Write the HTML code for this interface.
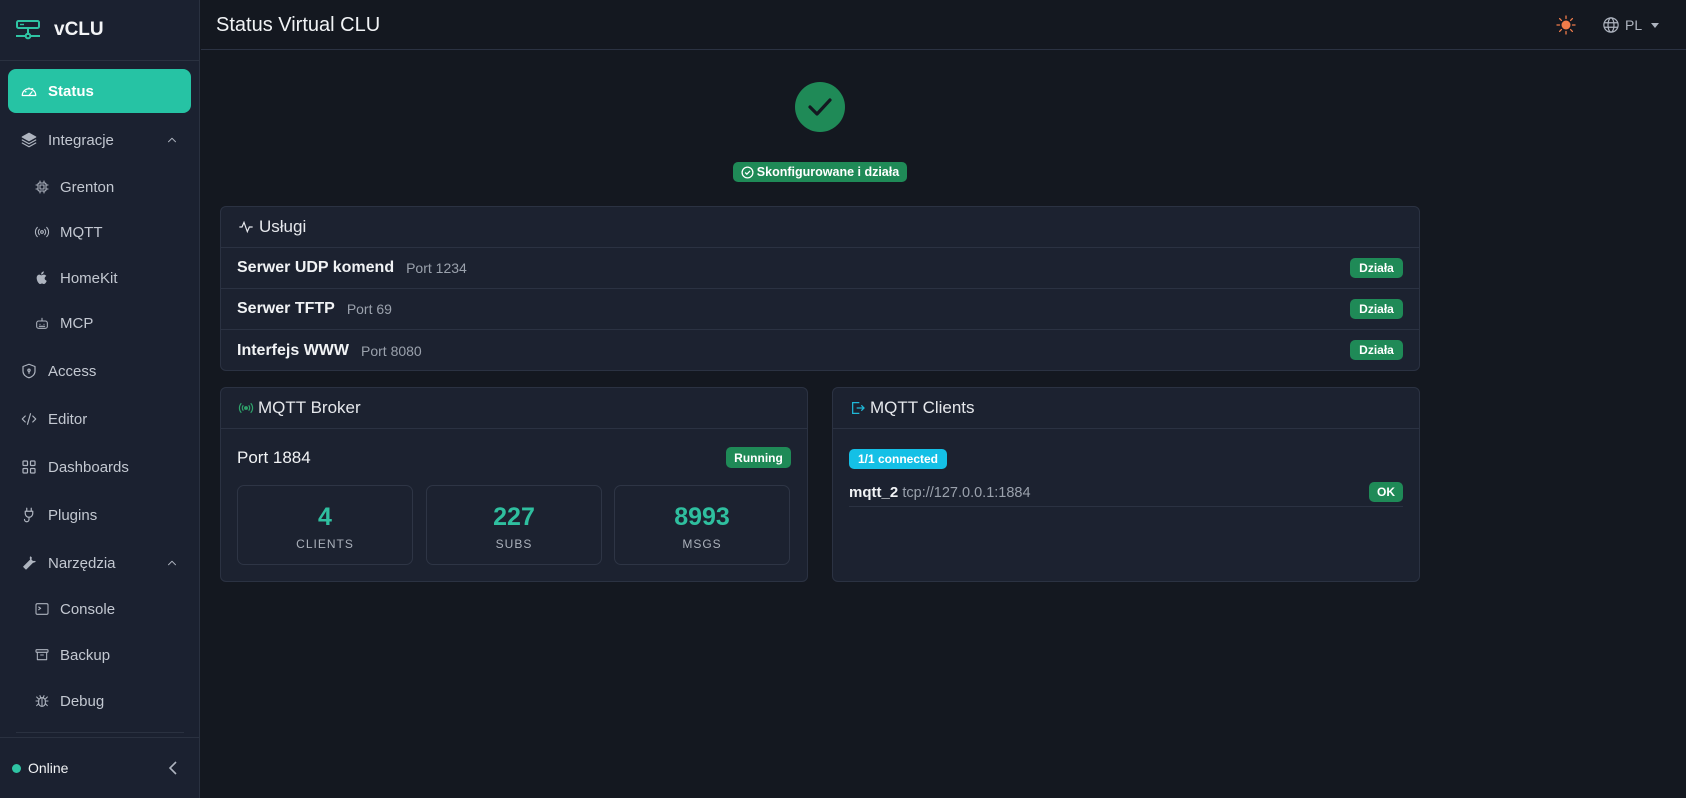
<!DOCTYPE html>
<html><head><meta charset="utf-8">
<style>
*{box-sizing:border-box;margin:0;padding:0}
body{width:1686px;height:798px;overflow:hidden;background:#141820;font-family:"Liberation Sans",sans-serif;color:#e6e8ec;position:relative}
.sb{position:absolute;left:0;top:0;width:200px;height:798px;background:#1b2130;border-right:1px solid #2a3140}
.abs{position:absolute}
.nav{position:absolute;left:0;width:200px;height:40px;display:flex;align-items:center;font-size:15px;color:#c3c8d1}
.nav svg{width:18px;height:18px;fill:none;stroke:#aeb4bf;stroke-width:1.6;stroke-linecap:round;stroke-linejoin:round}
.top{padding-left:20px}.top span{margin-left:10px}
.sub{padding-left:34px}.sub span{margin-left:10px}
.card{position:absolute;background:#1c2230;border:1px solid #2b3242;border-radius:6px}
.hd{height:41px;border-bottom:1px solid #2b3242;display:flex;align-items:center;padding-left:16px;font-size:17px;color:#e6e8ec}
.row{height:41px;border-bottom:1px solid #2b3242;display:flex;align-items:center;padding:0 16px;position:relative}
.row b{font-size:16px;color:#f1f3f5}.row i{font-style:normal;font-size:14px;color:#9aa1ac;margin-left:12px}
.bdg{position:absolute;background:#1f8a57;color:#fff;font-weight:bold;font-size:12px;border-radius:5px;display:flex;align-items:center;justify-content:center}
.stat{position:absolute;top:485px;width:176px;height:80px;border:1px solid #2e3545;border-radius:7px;text-align:center}
.stat .n{font-size:25px;font-weight:bold;color:#2fbf9f;margin-top:17px;line-height:28px}
.stat .l{font-size:12px;color:#aab0ba;letter-spacing:1px;margin-top:6px}
</style></head><body>
<div class="sb">
 <svg class="abs" style="left:15px;top:20px" width="26" height="20" viewBox="0 0 26 20" fill="none" stroke="#2fc4a4" stroke-width="2"><rect x="2" y="1" width="22" height="7" rx="1.5"/><path d="M13 8v7M1 16h9M16 16h9"/><circle cx="13" cy="16" r="2.3"/><path d="M5 4.5h4" stroke-width="1.4"/></svg>
 <div class="abs" style="left:54px;top:19px;font-size:19px;font-weight:bold;color:#f3f4f6">vCLU</div>
 <div class="abs" style="left:0;top:60px;width:200px;border-top:1px solid #2a3140"></div>
 <div class="abs" style="left:8px;top:69px;width:183px;height:44px;background:#26c3a4;border-radius:8px"></div>
 <div class="nav top" style="top:71px;color:#fff"><svg viewBox="0 0 24 24" style="stroke:#fff"><path d="M3 18a9 9 0 1 1 18 0z"/><path d="M12 18l4-5M7 13h1M16 9h1M12 8v1"/></svg><span style="font-weight:bold;color:#fff">Status</span></div>
 <div class="nav top" style="top:120px"><svg viewBox="0 0 24 24" style="fill:#aeb4bf"><path d="M12 3l9 5-9 5-9-5z"/><path d="M3 12l9 5 9-5M3 16l9 5 9-5" fill="none"/></svg><span>Integracje</span><svg viewBox="0 0 24 24" style="position:absolute;left:165px;width:14px"><path d="M6 15l6-6 6 6"/></svg></div>
 <div class="nav sub" style="top:167px"><svg viewBox="0 0 24 24" style="width:16px"><rect x="6" y="6" width="12" height="12" rx="2"/><rect x="9" y="9" width="6" height="6"/><path d="M9 3v3M15 3v3M9 18v3M15 18v3M3 9h3M3 15h3M18 9h3M18 15h3"/></svg><span>Grenton</span></div>
 <div class="nav sub" style="top:212px"><svg viewBox="0 0 24 24" style="width:16px"><circle cx="12" cy="12" r="2"/><path d="M8 8a6 6 0 0 0 0 8M16 8a6 6 0 0 1 0 8M5 5a10 10 0 0 0 0 14M19 5a10 10 0 0 1 0 14"/></svg><span>MQTT</span></div>
 <div class="nav sub" style="top:258px"><svg viewBox="0 0 24 24" style="width:16px;fill:#aeb4bf;stroke:none"><path d="M16 13c0-3 2.5-4 2.5-4-1.5-2-3.5-2-4-2-1.7 0-2.3 1-3.5 1S9.5 7 8 7c-2 0-4 1.7-4 5 0 4 3 9 5 9 1.2 0 1.7-.8 3-.8s1.8.8 3 .8c2 0 3.6-3.5 4-4.5C19 16 16 15 16 13zM13.5 5.5c1-1 1.3-2.300 1.2-3.500-1 .1-2.300.7-3 1.600-.7.800-1.200 2-1 3.200 1.100.1 2.200-.5 2.800-1.300z"/></svg><span>HomeKit</span></div>
 <div class="nav sub" style="top:303px"><svg viewBox="0 0 24 24" style="width:16px"><rect x="4" y="9" width="16" height="11" rx="3"/><path d="M12 5v4M9 14h.01M15 14h.01M8 17h8"/></svg><span>MCP</span></div>
 <div class="nav top" style="top:351px"><svg viewBox="0 0 24 24"><path d="M12 3l8 3v6c0 5-4 8-8 9-4-1-8-4-8-9V6z"/><circle cx="12" cy="11" r="1.5"/><path d="M12 12.5V15"/></svg><span>Access</span></div>
 <div class="nav top" style="top:399px"><svg viewBox="0 0 24 24"><path d="M7 8l-4 4 4 4M17 8l4 4-4 4M14 5l-4 14"/></svg><span>Editor</span></div>
 <div class="nav top" style="top:447px"><svg viewBox="0 0 24 24"><rect x="4" y="4" width="6" height="6" rx="1"/><rect x="14" y="4" width="6" height="6" rx="1"/><rect x="4" y="14" width="6" height="6" rx="1"/><rect x="14" y="14" width="6" height="6" rx="1"/></svg><span>Dashboards</span></div>
 <div class="nav top" style="top:495px"><svg viewBox="0 0 24 24"><path d="M9 3v4M15 3v4M7 7h10v3a5 5 0 0 1-10 0zM12 15v3a3 3 0 0 1-6 0"/></svg><span>Plugins</span></div>
 <div class="nav top" style="top:543px"><svg viewBox="0 0 24 24" style="fill:#aeb4bf"><path d="M14 4a5 5 0 0 0 6 6l-3 1-9 9-3-3 9-9 1-3z"/></svg><span>Narzędzia</span><svg viewBox="0 0 24 24" style="position:absolute;left:165px;width:14px"><path d="M6 15l6-6 6 6"/></svg></div>
 <div class="nav sub" style="top:589px"><svg viewBox="0 0 24 24" style="width:16px"><rect x="3" y="4" width="18" height="16" rx="2"/><path d="M7 9l3 2-3 2"/></svg><span>Console</span></div>
 <div class="nav sub" style="top:635px"><svg viewBox="0 0 24 24" style="width:16px"><rect x="3" y="4" width="18" height="4" rx="1"/><path d="M5 8v11h14V8M10 12h4"/></svg><span>Backup</span></div>
 <div class="nav sub" style="top:681px"><svg viewBox="0 0 24 24" style="width:16px"><rect x="7" y="7" width="10" height="13" rx="5"/><path d="M12 7v13M3 12h4M17 12h4M4 6l3 3M20 6l-3 3M4 19l3-3M20 19l-3-3M9 4l1 3M15 4l-1 3"/></svg><span>Debug</span></div>
 <div class="abs" style="left:16px;top:732px;width:168px;border-top:1px solid #2a3140"></div>
 <div class="abs" style="left:0;top:737px;width:200px;border-top:1px solid #2a3140"></div>
 <div class="abs" style="left:12px;top:764px;width:9px;height:9px;border-radius:50%;background:#2fc4a4"></div>
 <div class="abs" style="left:28px;top:760px;font-size:14px;color:#f1f3f5">Online</div>
 <svg class="abs" style="left:166px;top:760px" width="14" height="16" viewBox="0 0 14 16" fill="none" stroke="#aeb4bf" stroke-width="1.6"><path d="M10 2L4 8l6 6"/></svg>
</div>
<div class="abs" style="left:201px;top:49px;width:1485px;border-top:1px solid #2b3242"></div>
<div class="abs" style="left:216px;top:14px;font-size:20px;color:#f1f3f5">Status Virtual CLU</div>
<svg class="abs" style="left:1556px;top:15px" width="20" height="20" viewBox="0 0 20 20"><circle cx="10" cy="10" r="4.5" fill="#f07c4a"/><g stroke="#f07c4a" stroke-width="1.3" stroke-linecap="round"><path d="M10 1v2.5M10 16.5V19M1 10h2.5M16.5 10H19M3.6 3.6l1.8 1.8M14.6 14.6l1.8 1.8M3.6 16.4l1.8-1.8M14.6 5.4l1.8-1.8"/></g></svg>
<svg class="abs" style="left:1602px;top:16px" width="18" height="18" viewBox="0 0 24 24" fill="none" stroke="#aeb4bf" stroke-width="1.6"><circle cx="12" cy="12" r="9.5"/><ellipse cx="12" cy="12" rx="4" ry="9.5"/><path d="M3 9h18M3 15h18"/></svg>
<div class="abs" style="left:1625px;top:17px;font-size:14px;color:#aeb4bf">PL</div>
<div class="abs" style="left:1651px;top:23px;border:4px solid transparent;border-top:5px solid #aeb4bf"></div>

<div class="abs" style="left:795px;top:82px;width:50px;height:50px;border-radius:50%;background:#1f8a57"></div>
<svg class="abs" style="left:806px;top:94px" width="28" height="26" viewBox="0 0 28 26" fill="none" stroke="#141820" stroke-width="3.2" stroke-linecap="round" stroke-linejoin="round"><path d="M4 13l7 7L24 6"/></svg>
<div class="bdg" style="left:733px;top:162px;width:174px;height:20px;font-size:12.5px"><svg width="13" height="13" viewBox="0 0 14 14" fill="none" stroke="#fff" stroke-width="1.4" style="margin-right:3px"><circle cx="7" cy="7" r="5.8"/><path d="M4.5 7l1.8 1.8L9.7 5.3"/></svg>Skonfigurowane i działa</div>

<div class="card" style="left:220px;top:206px;width:1200px;height:165px">
 <div class="hd"><svg width="18" height="16" viewBox="0 0 24 24" fill="none" stroke="#e6e8ec" stroke-width="1.8" style="margin-right:4px"><path d="M2 12h4l3-7 5 14 3-7h5"/></svg>Usługi</div>
 <div class="row"><b>Serwer UDP komend</b><i>Port 1234</i><div class="bdg" style="right:16px;top:10px;width:53px;height:20px">Działa</div></div>
 <div class="row"><b>Serwer TFTP</b><i>Port 69</i><div class="bdg" style="right:16px;top:10px;width:53px;height:20px">Działa</div></div>
 <div class="row" style="border:0"><b>Interfejs WWW</b><i>Port 8080</i><div class="bdg" style="right:16px;top:10px;width:53px;height:20px">Działa</div></div>
</div>

<div class="card" style="left:220px;top:387px;width:588px;height:195px">
 <div class="hd"><svg width="18" height="16" viewBox="0 0 24 24" fill="none" stroke="#2fa36b" stroke-width="1.8" style="margin-right:3px"><circle cx="12" cy="12" r="2" fill="#2fa36b"/><path d="M8 8a6 6 0 0 0 0 8M16 8a6 6 0 0 1 0 8M5 5a10 10 0 0 0 0 14M19 5a10 10 0 0 1 0 14"/></svg>MQTT Broker</div>
</div>
<div class="abs" style="left:237px;top:448px;font-size:17px;color:#f1f3f5">Port 1884</div>
<div class="bdg" style="left:726px;top:447px;width:65px;height:21px">Running</div>
<div class="stat" style="left:237px"><div class="n">4</div><div class="l">CLIENTS</div></div>
<div class="stat" style="left:426px"><div class="n">227</div><div class="l">SUBS</div></div>
<div class="stat" style="left:614px"><div class="n">8993</div><div class="l">MSGS</div></div>

<div class="card" style="left:832px;top:387px;width:588px;height:195px">
 <div class="hd"><svg width="18" height="16" viewBox="0 0 24 24" fill="none" stroke="#1fb8d8" stroke-width="1.9" style="margin-right:3px"><path d="M14 4H4v16h10M10 12h11M17 8l4 4-4 4"/></svg>MQTT Clients</div>
</div>
<div class="bdg" style="left:849px;top:449px;width:98px;height:20px;background:#14c0e6">1/1 connected</div>
<div class="abs" style="left:849px;top:484px;font-size:15px"><b style="color:#f1f3f5">mqtt_2</b> <span style="color:#9aa1ac;font-size:14.5px">tcp://127.0.0.1:1884</span></div>
<div class="bdg" style="left:1369px;top:482px;width:34px;height:20px">OK</div>
<div class="abs" style="left:849px;top:506px;width:554px;border-top:1px solid #2b3242"></div>
</body></html>
